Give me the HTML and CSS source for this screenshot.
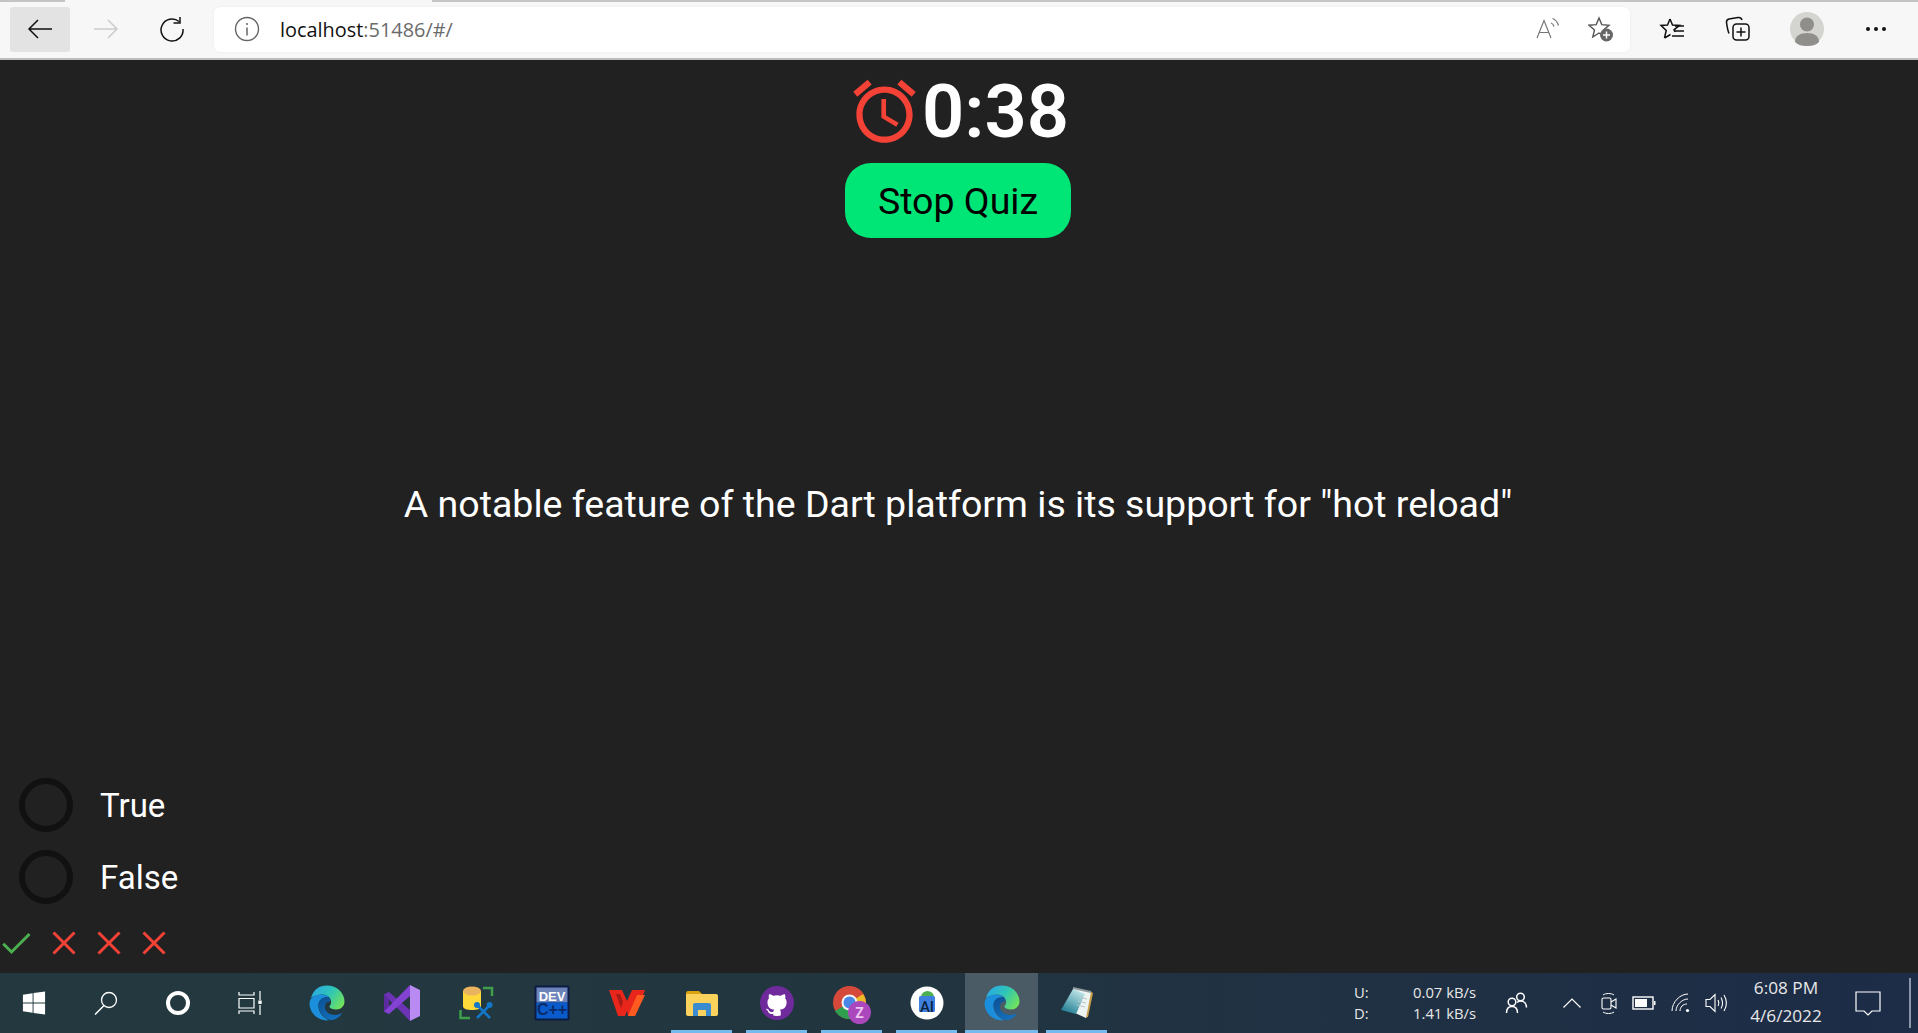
FILE: index.html
```html
<!DOCTYPE html>
<html lang="en">
<head>
    <meta charset="UTF-8">
    <title>Quiz</title>
    <link rel="stylesheet" href="styles.css">
</head>
<body>
    <svg class="defs" width="0" height="0">
        <defs>
            <linearGradient id="edgeTop" x1="0" y1="0.2" x2="1" y2="0.7">
                <stop offset="0" stop-color="#2aa8e4"/>
                <stop offset="0.5" stop-color="#2fc5b8"/>
                <stop offset="1" stop-color="#72e35a"/>
            </linearGradient>
            <linearGradient id="edgeDark" x1="0" y1="0" x2="0.6" y2="1">
                <stop offset="0" stop-color="#0c4f92"/>
                <stop offset="1" stop-color="#1270bd"/>
            </linearGradient>
            <linearGradient id="noteFace" x1="0.7" y1="0" x2="0.2" y2="1">
                <stop offset="0" stop-color="#c4e8ea"/>
                <stop offset="1" stop-color="#1a7a90"/>
            </linearGradient>
            <symbol id="edge" viewBox="0 0 36 36">
                <path fill="url(#edgeTop)" d="M2 13C4 5 10 .5 18 .5 28 .5 35.500 8 35.500 16.500 35.500 21 32 24.500 27 24.500 24 24.500 21 23.500 20.500 22 20 21 21.500 20.500 22 18.500 23 14 19 9.500 13.500 9.500 9 9.500 4.500 11 2 13z"/>
                <path fill="#1b8fdb" d="M.5 18C1 12 7 9 13 9.500 17 9.800 19 11 20 12.500 15 11.500 10 14 9.500 20 9 26 13 32 20 35.300 9 36.500.5 28 .5 18z"/>
                <path fill="url(#edgeDark)" d="M20 12.500C14 11.500 9.500 15 9.500 20 9.500 27 15 33 21 35 26 35.500 31 32 33 28 30 30 26 30.500 22.500 29.500 18 28 15.500 25 16 21 16.300 18 18 16.500 21 16.500 21.500 15 21 13.500 20 12.500z"/>
            </symbol>
        </defs>
    </svg>

    <header class="toolbar">
        <div class="tab-edge"></div>
        <button class="nav-btn active">
            <svg viewBox="0 0 26 24" class="ico-26"><path d="M25 12H2M11 3l-9 9 9 9" fill="none" stroke="#111" stroke-width="1.5"/></svg>
        </button>
        <button class="nav-btn">
            <svg viewBox="0 0 26 24" class="ico-26"><path d="M1 12h23M15 3l9 9-9 9" fill="none" stroke="#ccc" stroke-width="1.5"/></svg>
        </button>
        <button class="nav-btn">
            <svg viewBox="0 0 26 26" class="ico-26"><path d="M20 5.500A11 11 0 1 0 24 13M21 1v6h-6.500" fill="none" stroke="#111" stroke-width="1.500"/></svg>
        </button>
        <div class="address">
            <svg viewBox="0 0 26 26" class="ico-26 info"><circle cx="13" cy="13" r="11.500" fill="none" stroke="#666" stroke-width="1.400"/><path d="M13 11.500v8M13 7v2" stroke="#666" stroke-width="1.500"/></svg>
            <span class="url">localhost<span class="url-dim">:51486/#/</span></span>
            <svg viewBox="0 0 24 24" class="ico-24 read-aloud"><path d="M1 21 8 3.500 15 21M3.200 15.500h9.600" fill="none" stroke="#777" stroke-width="1.200"/><path d="M15 6c1.500.5 2.500 1.500 3 3.500M16.500 1.500c3 1 5 3.500 6 7" fill="none" stroke="#777" stroke-width="1.200"/></svg>
            <svg viewBox="0 0 26 26" class="ico-26 star-add"><path d="M11 2l2.800 6.600 7.200.6-5.500 4.700 1.700 7L11 17l-6.200 4 1.700-7L1 9.200l7.200-.6z" fill="none" stroke="#555" stroke-width="1.400"/><circle cx="18.500" cy="19" r="6.500" fill="#666"/><path d="M18.500 15.500v7M15 19h7" stroke="#fff" stroke-width="1.500"/></svg>
        </div>
        <svg viewBox="0 0 26 26" class="ico-26 favs"><path d="M11 3l2.500 6 7 .4-5.500 4.400 1 2.200M5.500 22l1.700-7.500L2 9.400l6.500-.4L11 3M5.500 22l6-3.500" fill="none" stroke="#111" stroke-width="1.500"/><path d="M16 10h9M15 15h10M13 20h12" stroke="#111" stroke-width="1.400"/></svg>
        <svg viewBox="0 0 26 26" class="ico-26 collections"><rect x="8" y="8" width="16" height="16" rx="3.500" fill="none" stroke="#111" stroke-width="1.500"/><path d="M4 17.500C2.500 14 2 10 1.500 6.500 1.300 4.500 2.500 3.300 4 3l9-1.500c2-.3 3.500.8 4 2.500" fill="none" stroke="#111" stroke-width="1.500"/><path d="M16 11.500v9M11.500 16h9" stroke="#111" stroke-width="1.500"/></svg>
        <div class="avatar">
            <svg viewBox="0 0 34 34" class="ico-34"><circle cx="17" cy="17" r="17" fill="#d4d4d0"/><circle cx="17" cy="12.500" r="7" fill="#8f8e8b"/><path d="M5 30c0-6 5-9 12-9s12 3 12 9c-3 3-7 4-12 4s-9-1-12-4z" fill="#8f8e8b"/></svg>
        </div>
        <div class="more"><i></i><i></i><i></i></div>
    </header>

    <main class="quiz">
        <div class="timer">
            <svg viewBox="0 0 24 24" class="alarm"><path d="M22 5.720l-4.600-3.860-1.290 1.530 4.600 3.860L22 5.720zM7.880 3.390L6.600 1.860 2 5.710l1.290 1.530 4.590-3.850zM12.500 8H11v6l4.750 2.850.75-1.230-4-2.370V8zM12 4c-4.970 0-9 4.030-9 9s4.020 9 9 9c4.970 0 9-4.030 9-9s-4.030-9-9-9zm0 16c-3.870 0-7-3.130-7-7s3.130-7 7-7 7 3.130 7 7-3.130 7-7 7z"/></svg>
            <span class="time-left">0:38</span>
        </div>
        <button class="stop-btn">Stop Quiz</button>
        <div class="question">A notable feature of the Dart platform is its support for "hot reload"</div>
        <div class="option"><span class="radio"></span><span>True</span></div>
        <div class="option"><span class="radio"></span><span>False</span></div>
        <div class="score">
            <svg viewBox="0 0 24 24" class="score-ico check"><path d="M3.500 12.500 9 18 21 6" fill="none" stroke="#4caf50" stroke-width="2"/></svg>
            <svg viewBox="0 0 24 24" class="score-ico cross"><path d="M5 5l14 14M19 5 5 19" fill="none" stroke="#f44336" stroke-width="2"/></svg>
            <svg viewBox="0 0 24 24" class="score-ico cross"><path d="M5 5l14 14M19 5 5 19" fill="none" stroke="#f44336" stroke-width="2"/></svg>
            <svg viewBox="0 0 24 24" class="score-ico cross"><path d="M5 5l14 14M19 5 5 19" fill="none" stroke="#f44336" stroke-width="2"/></svg>
        </div>
    </main>

    <footer class="taskbar">
        <div class="sys-cell">
            <svg viewBox="0 0 24 26" class="ico-24"><path fill="#fff" d="M0 4l10.500-1.500V12.500H0zM11.500 2.300 24 .500v12H11.500zM0 13.500h10.500v10L0 22zM11.500 13.500H24V25.500l-12.500-1.800z"/></svg>
        </div>
        <div class="sys-cell">
            <svg viewBox="0 0 24 24" class="ico-24"><circle cx="15" cy="9" r="7.500" fill="none" stroke="#fff" stroke-width="1.300"/><path d="M10 14.500 1 23.500" stroke="#fff" stroke-width="1.500"/></svg>
        </div>
        <div class="sys-cell"><span class="cortana"></span></div>
        <div class="sys-cell">
            <svg viewBox="0 0 24 24" class="ico-24"><path d="M1 1v3h15V1M1 7.500h15v9.500H1zM1 23v-3h15v3M22 0v9M22 14v10" fill="none" stroke="#fff" stroke-width="1.200"/><rect x="20.300" y="9.500" width="3.400" height="3.400" fill="#fff"/></svg>
        </div>

        <div class="app-cell first">
            <svg class="ico-36"><use href="#edge"/></svg>
        </div>
        <div class="app-cell">
            <svg viewBox="0 0 36 36" class="ico-36">
                <path fill="#5b2a9e" d="M0 9.500 5 7v22l-5-2.500z"/>
                <path fill="#6d33b5" d="M0 9.500 5 7l21 18v11z"/>
                <path fill="#8342d2" d="M26 0v11L5 29l-5-2.500z"/>
                <path fill="#b98af2" d="M26 0l10 5v26l-10 5z"/>
            </svg>
        </div>
        <div class="app-cell">
            <svg viewBox="0 0 36 36" class="ico-36">
                <path fill="#ffd83a" d="M4 6h18v15c0 3-4 4-9 4s-9-1-9-4z"/>
                <ellipse cx="13" cy="6" rx="9" ry="4.500" fill="#e9b35f"/>
                <path d="M24 3h9v8M1.500 25v8H11" fill="none" stroke="#3f9f4a" stroke-width="2.500"/>
                <path d="M17 19l14 14M32 19 18 33" stroke="#1277c9" stroke-width="2.600"/>
                <circle cx="30.500" cy="20" r="3" fill="#1277c9"/>
                <circle cx="18" cy="20" r="3" fill="#1277c9"/>
            </svg>
        </div>
        <div class="app-cell">
            <svg viewBox="0 0 36 36" class="ico-36"><rect x="0.500" y="0.500" width="35" height="35" rx="2" fill="#0b1c44"/><rect x="2.500" y="2.500" width="31" height="15" fill="#6d84bb"/><rect x="2.500" y="17.500" width="31" height="16" fill="#0a5ccc"/><text x="18" y="15.500" class="dev-top">DEV</text><text x="18" y="30" class="dev-bottom">C++</text></svg>
        </div>
        <div class="app-cell">
            <svg viewBox="0 0 36 28" class="ico-36">
                <path fill="#e8261c" d="M0 1h13l5 11 5-11h13L26 27h-7l-1-5-2 5H9z"/>
                <path fill="#ff5a1f" d="M19 27l9-21h8L26 27z"/>
                <path fill="#a71d16" d="M7 5h4l3 8-2 6z"/>
            </svg>
        </div>
        <div class="app-cell running">
            <svg viewBox="0 0 32 28" class="ico-32"><path fill="#d9a210" d="M0 4a2 2 0 0 1 2-2h11l3 3h-16z"/><path fill="#fbd25b" d="M0 5h30a2 2 0 0 1 2 2v18a2 2 0 0 1-2 2H2a2 2 0 0 1-2-2z"/><path fill="#3b8bd0" d="M7 27V16a2 2 0 0 1 2-2h14a2 2 0 0 1 2 2v11h-5v-6h-8v6z"/></svg>
        </div>
        <div class="app-cell running">
            <svg viewBox="0 0 34 34" class="ico-34">
                <circle cx="17" cy="17" r="17" fill="#6f2a9c"/>
                <circle cx="17" cy="16.500" r="13.500" fill="#fff"/>
                <path transform="translate(2 2) scale(1.875)" fill="#6f2a9c" d="M8 0C3.580 0 0 3.580 0 8c0 3.540 2.290 6.530 5.470 7.590.4.070.55-.17.55-.38 0-.19-.01-.82-.01-1.490-2.010.37-2.530-.49-2.690-.94-.09-.23-.48-.94-.82-1.130-.28-.15-.68-.52-.01-.53.63-.01 1.080.58 1.230.82.72 1.210 1.870.87 2.330.66.07-.52.28-.87.51-1.070-1.780-.2-3.640-.89-3.640-3.950 0-.87.31-1.590.82-2.150-.08-.2-.36-1.020.08-2.120 0 0 .67-.21 2.200.82.64-.18 1.320-.27 2-.27.68 0 1.360.09 2 .27 1.530-1.040 2.200-.82 2.200-.82.44 1.100.16 1.920.08 2.120.51.56.82 1.270.82 2.150 0 3.070-1.870 3.750-3.650 3.950.29.25.54.73.54 1.480 0 1.070-.01 1.930-.01 2.200 0 .21.15.46.55.38A8.013 8.013 0 0016 8c0-4.420-3.580-8-8-8z"/>
            </svg>
        </div>
        <div class="app-cell running">
            <svg viewBox="0 0 38 38" class="ico-38 chrome">
                <circle cx="16.500" cy="16.500" r="16.500" fill="#d6483a"/>
                <path d="M2 25A16.500 16.500 0 0 0 24 31L16.500 16.500z" fill="#2f9e4f"/>
                <path d="M16.500 16.500 30 8a16.500 16.500 0 0 1 3 10l-8 13z" fill="#edbb2a"/>
                <circle cx="16.500" cy="16.500" r="8" fill="#f4f4f4"/>
                <circle cx="16.500" cy="16.500" r="6" fill="#4a86e8"/>
                <circle cx="26.500" cy="26.500" r="11.500" fill="#ab47bc"/>
                <text x="26.500" y="31.500" class="chrome-z">Z</text>
            </svg>
        </div>
        <div class="app-cell running">
            <svg viewBox="0 0 34 34" class="ico-34"><circle cx="17" cy="17" r="16.500" fill="#fff"/><path d="M11 11a6.500 6 0 0 1 13 0z" fill="#4caf50"/><rect x="9" y="10" width="16" height="16" rx="1.500" fill="#3f7fe0"/><text x="17" y="26" class="as-letters">AI</text></svg>
        </div>
        <div class="app-cell running active-app">
            <svg class="ico-36"><use href="#edge"/></svg>
        </div>
        <div class="app-cell running">
            <svg viewBox="0 0 36 36" class="ico-36">
                <path fill="#c89f4a" d="M31 6l3 2-5 24-3 1z"/>
                <path fill="#eef4f2" d="M14 3l18 4-5 26-11-5z"/>
                <path fill="url(#noteFace)" d="M14 4l12 5-9 20L2 25z"/>
                <path d="M14 3l18 4" stroke="#8d9a9c" stroke-width="2"/>
                <path d="M20 12l8 2M19 16l8 2M18 20l8 2" stroke="#b5c6c8" stroke-width="1"/>
            </svg>
        </div>

        <div class="tray">
            <div class="net">
                <div class="net-row"><span>U:</span><span>0.07 kB/s</span></div>
                <div class="net-row"><span>D:</span><span>1.41 kB/s</span></div>
            </div>
            <svg viewBox="0 0 24 24" class="tray-people"><circle cx="15.500" cy="6" r="3.800" fill="none" stroke="#fff" stroke-width="1.500"/><circle cx="7" cy="11" r="3.800" fill="none" stroke="#fff" stroke-width="1.500"/><path d="M1.500 22c0-4 2-6.500 5.500-6.500S12.500 18 12.500 22M12 11.500c1-1 2-1.500 3.500-1.500 4 0 6 3 6 6.500" fill="none" stroke="#fff" stroke-width="1.500"/></svg>
            <svg viewBox="0 0 18 18" class="tray-chevron"><path d="M0.500 13.500 9 5l8.500 8.500" fill="none" stroke="#fff" stroke-width="1.200"/></svg>
            <svg viewBox="0 0 16 24" class="tray-camera"><path d="M2 4c3-2 8-2 11 0M2 21c3 2 8 2 11 0" fill="none" stroke="#fff" stroke-width="1"/><rect x="1" y="7" width="9" height="11" rx="1.500" fill="none" stroke="#fff" stroke-width="1.100"/><path d="M10 11l5-3v9l-5-3" fill="none" stroke="#fff" stroke-width="1.100"/></svg>
            <svg viewBox="0 0 24 16" class="tray-battery"><rect x="1" y="2" width="20" height="12" fill="none" stroke="#fff" stroke-width="1.400"/><rect x="3" y="4" width="12" height="8" fill="#fff"/><rect x="22" y="6" width="1.500" height="4" fill="#fff"/></svg>
            <svg viewBox="0 0 20 20" class="tray-wifi"><path d="M1 18C1 9 9 1 17 1M5 18c0-6 6-12 12-12M9 18c0-4 3-7 7-7" fill="none" stroke="#fff" stroke-width="1"/><circle cx="16.500" cy="17.500" r="1.600" fill="#fff"/></svg>
            <svg viewBox="0 0 22 22" class="tray-speaker"><path d="M1 7.500h4L10 2.500v17l-5-5H1z" fill="none" stroke="#fff" stroke-width="1.100"/><path d="M13 8c1 2 1 4 0 6M16 5.500c2 3.500 2 7.500 0 11M19 3c3 5 3 11 0 16" fill="none" stroke="#fff" stroke-width="1.100"/></svg>
            <div class="clock">
                <span>6:08 PM</span>
                <span>4/6/2022</span>
            </div>
            <svg viewBox="0 0 26 26" class="tray-notify"><path d="M1 2h24v19h-8l-4 4-4-4H1z" fill="none" stroke="#fff" stroke-width="1.200"/></svg>
            <span class="show-desktop"></span>
        </div>
    </footer>
</body>
</html>
```

FILE: styles.css
```css
body {
    margin: 0;
    height: 1033px;
    overflow: hidden;
    display: flex;
    flex-direction: column;
    background: #212121;
    font-family: Roboto, sans-serif;
}
svg {
    display: block;
    flex: none;
}
.defs {
    position: absolute;
}
.ico-24 { width: 24px; height: 24px; }
.ico-26 { width: 26px; height: 26px; }
.ico-32 { width: 32px; height: 28px; }
.ico-34 { width: 34px; height: 34px; }
.ico-36 { width: 36px; height: 36px; }
.ico-38 { width: 38px; height: 38px; }

/* browser toolbar */
.toolbar {
    position: relative;
    height: 58px;
    flex: none;
    display: flex;
    align-items: center;
    padding-left: 10px;
    background: #f7f7f7;
    border-bottom: 2px solid #bdbdbd;
}
.toolbar::before {
    content: "";
    position: absolute;
    top: 0;
    left: 0;
    right: 0;
    height: 2px;
    background: #c4c4c4;
}
.tab-edge {
    position: absolute;
    z-index: 1;
    top: 0;
    left: 65px;
    width: 367px;
    height: 2px;
    background: #f7f7f7;
}
.nav-btn {
    width: 60px;
    height: 45px;
    margin-right: 6px;
    padding: 0;
    border: none;
    border-radius: 3px;
    background: none;
    display: flex;
    align-items: center;
    justify-content: center;
}
.nav-btn.active {
    background: #e3e3e3;
}
.address {
    width: 1416px;
    height: 45px;
    margin-left: 6px;
    display: flex;
    align-items: center;
    background: #fff;
    border-radius: 6px;
    box-shadow: 0 0 3px rgba(0, 0, 0, 0.06);
}
.info {
    margin-left: 20px;
}
.url {
    margin-left: 20px;
    font-family: "Open Sans", sans-serif;
    font-size: 19.9px;
    color: #111;
}
.url-dim {
    color: #6b6b6b;
}
.read-aloud {
    margin-left: auto;
}
.star-add {
    margin-left: 28px;
    margin-right: 16px;
}
.favs {
    margin-left: 29px;
}
.collections {
    margin-left: 40px;
}
.avatar {
    margin-left: 39px;
}
.more {
    margin-left: 42px;
    display: flex;
    gap: 4px;
}
.more i {
    width: 4px;
    height: 4px;
    border-radius: 50%;
    background: #111;
}

/* quiz page */
.quiz {
    flex: 1;
    min-height: 0;
    display: flex;
    flex-direction: column;
    color: #fff;
    padding: 14px 2px 0 0;
}
.timer {
    display: flex;
    align-items: center;
    justify-content: center;
    height: 75px;
}
.alarm {
    width: 75px;
    height: 75px;
    fill: #f44336;
}
.time-left {
    font-size: 74px;
    font-weight: 600;
}
.stop-btn {
    align-self: center;
    width: 226px;
    height: 75px;
    margin-top: 14px;
    padding: 0;
    border: none;
    border-radius: 26px;
    background: #00e676;
    color: #000;
    font-family: Roboto, sans-serif;
    font-size: 37.5px;
}
.question {
    flex: 1;
    display: flex;
    align-items: center;
    justify-content: center;
    font-size: 37.5px;
}
.option {
    height: 72px;
    flex: none;
    display: flex;
    align-items: center;
    gap: 27px;
    padding-left: 19px;
    font-size: 33px;
}
.radio {
    width: 54px;
    height: 54px;
    box-sizing: border-box;
    border: 6px solid #111;
    border-radius: 50%;
}
.score {
    height: 60px;
    flex: none;
    display: flex;
    align-items: center;
}
.score-ico {
    width: 36px;
    height: 36px;
}
.check {
    margin-left: -2px;
}
.cross {
    margin-left: 9px;
}
.check + .cross {
    margin-left: 12px;
}

/* windows taskbar */
.taskbar {
    height: 60px;
    flex: none;
    display: flex;
    align-items: center;
    background: linear-gradient(90deg, #23393f 0%, #22363f 40%, #1d2c47 100%);
    color: #fff;
}
.sys-cell {
    width: 72px;
    height: 60px;
    flex: none;
    display: flex;
    align-items: center;
    justify-content: center;
}
.sys-cell:first-child {
    margin-left: -2px;
}
.cortana {
    width: 24px;
    height: 24px;
    box-sizing: border-box;
    border: 4px solid #fff;
    border-radius: 50%;
}
.app-cell {
    position: relative;
    width: 75px;
    height: 60px;
    flex: none;
    display: flex;
    align-items: center;
    justify-content: center;
}
.app-cell.first {
    margin-left: 3px;
}
.app-cell.running::after {
    content: "";
    position: absolute;
    left: 7px;
    right: 7px;
    bottom: 0;
    height: 3px;
    background: #76b9ed;
}
.app-cell.active-app {
    width: 73px;
    margin: 0 1px;
    background: #4a5b65;
}
.app-cell.active-app::after {
    left: 0;
    right: 0;
}
.chrome {
    margin-top: 4px;
}
.dev-top, .dev-bottom {
    font-family: "Liberation Sans", sans-serif;
    font-weight: 700;
    text-anchor: middle;
}
.dev-top {
    fill: #fff;
    font-size: 13px;
}
.dev-bottom {
    fill: #0a2a6a;
    font-size: 16px;
}
.chrome-z {
    font-family: Roboto, sans-serif;
    font-size: 14px;
    font-weight: 700;
    fill: #ecc6f2;
    text-anchor: middle;
}
.as-letters {
    font-family: Roboto, sans-serif;
    font-size: 15px;
    font-weight: 500;
    fill: #0b1f3a;
    text-anchor: middle;
}

/* system tray */
.tray {
    margin-left: auto;
    display: flex;
    align-items: center;
    font-family: "Open Sans", sans-serif;
    color: #e8e8e8;
}
.net {
    width: 122px;
    font-size: 14.8px;
    line-height: 21px;
}
.net-row {
    display: flex;
    justify-content: space-between;
}
.tray-people { width: 24px; height: 24px; margin-left: 29px; }
.tray-chevron { width: 18px; height: 18px; margin-left: 34px; }
.tray-camera { width: 16px; height: 24px; margin-left: 20px; }
.tray-battery { width: 24px; height: 16px; margin-left: 15px; }
.tray-wifi { width: 20px; height: 20px; margin-left: 15px; }
.tray-speaker { width: 22px; height: 22px; margin-left: 14px; }
.clock {
    width: 90px;
    margin-left: 14px;
    margin-bottom: 2px;
    display: flex;
    flex-direction: column;
    align-items: center;
    font-size: 17.2px;
    line-height: 28px;
}
.tray-notify { width: 26px; height: 26px; margin-left: 24px; }
.show-desktop {
    width: 2px;
    height: 50px;
    margin-left: 28px;
    margin-right: 7px;
    background: #8b97a6;
}
```
